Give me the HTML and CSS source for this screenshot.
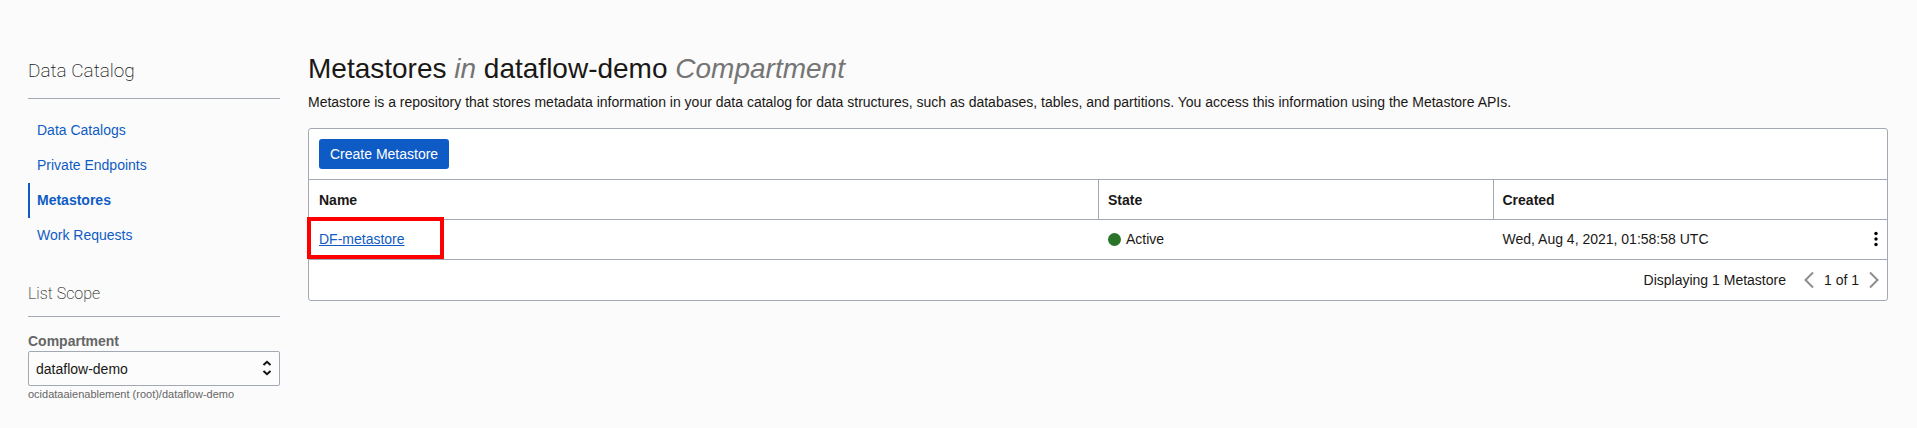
FILE: index.html
```html
<!DOCTYPE html>
<html lang="en">
<head>
<meta charset="utf-8">
<meta name="viewport" content="width=device-width, initial-scale=1">
<title>Metastores</title>
<link rel="stylesheet" href="styles.css">
</head>
<body>
<div class="page">
  <aside class="sidebar">
    <h2 class="sidebar-title">Data Catalog</h2>
    <nav class="nav">
      <a class="nav-link" href="#catalogs">Data Catalogs</a>
      <a class="nav-link" href="#endpoints">Private Endpoints</a>
      <a class="nav-link nav-link-active" href="#metastores" aria-current="page">Metastores</a>
      <a class="nav-link" href="#requests">Work Requests</a>
    </nav>
    <h3 class="scope-title">List Scope</h3>
    <label class="field-label" for="compartment">Compartment</label>
    <div class="select-wrap">
      <select class="select" id="compartment">
        <option>dataflow-demo</option>
      </select>
      <svg class="select-icon" width="10" height="16" viewBox="0 0 10 16" aria-hidden="true"><path d="M1.5 5 5 1.8 8.500 5M1.500 11 5 14.200 8.500 11"/></svg>
    </div>
    <p class="hint">ocidataaienablement (root)/dataflow-demo</p>
  </aside>
  <main class="main">
    <h1 class="title">Metastores <em>in</em> dataflow-demo <em>Compartment</em></h1>
    <p class="description">Metastore is a repository that stores metadata information in your data catalog for data structures, such as databases, tables, and partitions. You access this information using the Metastore APIs.</p>
    <section class="panel">
      <div class="toolbar">
        <button class="button" type="button">Create Metastore</button>
      </div>
      <table class="table">
        <thead>
          <tr><th class="col-name">Name</th><th>State</th><th>Created</th></tr>
        </thead>
        <tbody>
          <tr>
            <td class="cell-name"><a class="link" href="#df-metastore">DF-metastore</a><span class="highlight"></span></td>
            <td><span class="status"><span class="dot"></span>Active</span></td>
            <td>
              <div class="created">
                <span>Wed, Aug 4, 2021, 01:58:58 UTC</span>
                <button class="icon-button" type="button" aria-label="Actions"><svg width="4" height="16" viewBox="0 0 4 16"><circle cx="2" cy="2.500" r="1.700"/><circle cx="2" cy="8" r="1.700"/><circle cx="2" cy="13.500" r="1.700"/></svg></button>
              </div>
            </td>
          </tr>
        </tbody>
      </table>
      <div class="footer">
        <span class="count">Displaying 1 Metastore</span>
        <button class="icon-button pager" type="button" aria-label="Previous page"><svg width="10" height="18" viewBox="0 0 10 18"><path d="M9 1.500 1.500 9 9 16.500"/></svg></button>
        <span>1 of 1</span>
        <button class="icon-button pager" type="button" aria-label="Next page"><svg width="10" height="18" viewBox="0 0 10 18"><path d="M1 1.500 8.500 9 1 16.500"/></svg></button>
      </div>
    </section>
  </main>
</div>
</body>
</html>
```
FILE: styles.css
```css
* { box-sizing: border-box; }
body {
  margin: 0;
  background: #fbfbfb;
  color: #1a1816;
  font: 14px/20px "Liberation Sans", Arial, sans-serif;
}
h1, h2, h3, p { margin: 0; }
button, select { font: inherit; }
.page {
  display: flex;
  gap: 28px;
  padding: 48px 29px 20px 28px;
}
.sidebar { flex: 0 0 252px; }
.sidebar-title, .scope-title {
  border-bottom: 1px solid #a2a9b5;
  color: #222;
  font-family: Roboto, "Liberation Sans", sans-serif;
  font-weight: 200;
}
.sidebar-title {
  height: 51px;
  font-size: 19px;
  line-height: 46px;
}
.scope-title {
  margin-top: 27px;
  padding-bottom: 8px;
  font-size: 16px;
  line-height: 28px;
}
.nav {
  display: flex;
  flex-direction: column;
  padding-top: 14px;
}
.nav-link {
  padding-left: 7px;
  border-left: 2px solid transparent;
  color: #0f5bc5;
  line-height: 35px;
  text-decoration: none;
}
.nav-link-active {
  border-color: #0f5bc5;
  font-weight: bold;
}
.field-label {
  display: block;
  margin-top: 14px;
  color: #666;
  font-weight: bold;
}
.select-wrap { position: relative; }
.select {
  display: block;
  width: 100%;
  height: 35px;
  padding: 0 28px 0 7px;
  appearance: none;
  border: 1px solid #a2a9b5;
  border-radius: 2px;
  background: #fcfcfc;
  color: #1a1816;
}
.select-icon {
  position: absolute;
  top: 9px;
  right: 8px;
  fill: none;
  stroke: #111;
  stroke-width: 2;
  pointer-events: none;
}
.hint {
  color: #666;
  font-size: 11px;
  line-height: 16px;
}
.main { flex: 1; min-width: 0; }
.title {
  font-size: 28px;
  font-weight: normal;
  line-height: 42px;
}
.title em { color: #757575; }
.description { margin: 2px 0 16px; }
.panel {
  border: 1px solid #a2a9b5;
  border-radius: 3px;
  background: #fff;
}
.toolbar { padding: 10px; }
.button {
  display: block;
  height: 30px;
  padding: 0 11px;
  border: 0;
  border-radius: 3px;
  background: #0f5bc5;
  color: #fff;
}
.table {
  width: 100%;
  border-collapse: separate;
  border-spacing: 0;
  border-top: 1px solid #a2a9b5;
  table-layout: fixed;
}
.table th, .table td {
  height: 40px;
  padding: 0 10px;
  border-bottom: 1px solid #a2a9b5;
  text-align: left;
}
.table td { padding-bottom: 1px; }
.table th + th {
  padding-left: 9px;
  border-left: 1px solid #a2a9b5;
}
.col-name { width: 50%; }
.cell-name { position: relative; }
.link { color: #0f5bc5; }
.highlight {
  position: absolute;
  top: -3px;
  left: -2px;
  width: 137px;
  height: 42px;
  border: 4px solid #f00;
  pointer-events: none;
}
.status { display: flex; align-items: center; gap: 5px; }
.dot {
  width: 13px;
  height: 13px;
  border-radius: 50%;
  background: #2a7429;
}
.created {
  display: flex;
  align-items: center;
  justify-content: space-between;
}
.created .icon-button { margin-right: -1px; }
.icon-button {
  display: flex;
  padding: 0;
  border: 0;
  background: none;
}
.pager svg { fill: none; stroke: #8d8d8d; stroke-width: 2; }
.footer {
  display: flex;
  align-items: center;
  justify-content: flex-end;
  gap: 10px;
  height: 40px;
  padding: 0 8px;
}
.count { margin-right: 8px; }
```
